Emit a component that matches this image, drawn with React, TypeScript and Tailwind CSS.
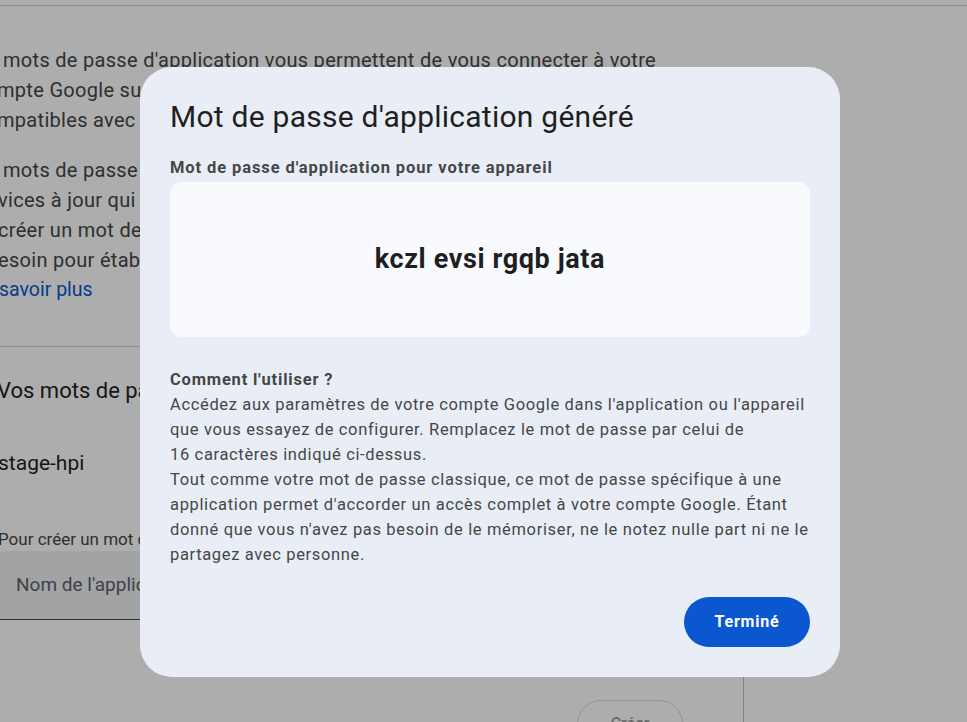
import React from "react";

const font = { fontFamily: "Roboto, 'Noto Sans', sans-serif" };

const PageBehind: React.FC = () => {
  return (
    <div className="min-h-screen bg-white text-[#444746] overflow-hidden" style={font}>
      <div className="h-[6px] border-b border-[#d3d3d3]" />
      <div className="w-[744px]">
        {/* intro text, cut on the left like the real page */}
        <div className="pt-[39px] text-[20px] leading-[30px] tracking-[0.3px] whitespace-nowrap">
          <div className="pl-[3px]">mots de passe d'application vous permettent de vous connecter à votre</div>
          <div className="-ml-[3px]">mpte Google sur des applications et des services plus anciens qui ne sont pas</div>
          <div className="-ml-[3px]">mpatibles avec les normes de sécurité modernes.</div>
          <div className="mt-[20px] pl-[3px]">mots de passe d'application sont moins sécurisés que les applications et</div>
          <div className="-ml-[2px]">vices à jour qui utilisent des normes de sécurité modernes. Avant de</div>
          <div className="-ml-[2px]">créer un mot de passe d'application, vérifiez si votre application en a</div>
          <div className="-ml-[2px]">esoin pour établir la connexion.</div>
          <div className="-ml-[1px] text-[19.5px] tracking-normal text-[#0b57d0]">savoir plus</div>
        </div>

        <div className="mt-[41px] border-t border-[#d3d3d3]" />

        <div className="pt-[29px] text-[22px] leading-[30px] text-[#1f1f1f] whitespace-nowrap -ml-[3px]">
          Vos mots de passe d'application
        </div>
        <div className="pt-[42px] text-[21px] leading-[30px] text-[#1f1f1f] whitespace-nowrap -ml-[2px]">
          stage-hpi
        </div>

        <div className="mt-[49px] border-r border-[#c4c7c5] pb-[80px]">
          <div className="text-[17px] leading-[24px] whitespace-nowrap -ml-[2px]">
            Pour créer un mot de passe spécifique à une application, saisissez son nom ci-dessous…
          </div>
          <div className="h-[69px] w-[720px] bg-[#eef0f3] border-b border-[#444746] flex items-center pl-[16px] text-[19px] text-[#5f6368]">
            Nom de l'application
          </div>
          <div className="mt-[80px] ml-[577px] w-[106px] h-[48px] rounded-full border border-[#d9d9d9] flex items-center justify-center text-[#9a9a9a] text-[16px] font-medium">
            Créer
          </div>
        </div>
      </div>
    </div>
  );
};

const Dialog: React.FC = () => {
  return (
    <div
      className="fixed left-[140px] top-[67px] w-[700px] rounded-[32px] bg-[#e9eef6] px-[30px] pt-[32px] pb-[30px]"
      style={font}
    >
      <h2 className="text-[30px] leading-[36px] font-normal tracking-[0.25px] text-[#1f1f1f]">
        Mot de passe d'application généré
      </h2>
      <div className="mt-[21px] text-[16.5px] leading-[24px] font-bold tracking-[0.9px] text-[#444746]">
        Mot de passe d'application pour votre appareil
      </div>
      <div className="mt-[2px] h-[155px] rounded-[12px] bg-[#f8fafd] flex items-center justify-center">
        <span className="text-[27px] font-bold text-[#1f1f1f] tracking-[0.6px]">kczl evsi rgqb jata</span>
      </div>
      <div className="mt-[30px] text-[16.5px] leading-[25px] tracking-[0.65px] text-[#444746]">
        <div className="font-bold tracking-[0.8px]">Comment l'utiliser ?</div>
        <div>Accédez aux paramètres de votre compte Google dans l'application ou l'appareil</div>
        <div>que vous essayez de configurer. Remplacez le mot de passe par celui de</div>
        <div>16 caractères indiqué ci-dessus.</div>
        <div>Tout comme votre mot de passe classique, ce mot de passe spécifique à une</div>
        <div>application permet d'accorder un accès complet à votre compte Google. Étant</div>
        <div>donné que vous n'avez pas besoin de le mémoriser, ne le notez nulle part ni ne le</div>
        <div>partagez avec personne.</div>
      </div>
      <div className="mt-[30px] flex justify-end">
        <button className="h-[50px] w-[126px] rounded-full bg-[#0b57d0] text-white text-[16px] font-bold tracking-[0.8px]">
          Terminé
        </button>
      </div>
    </div>
  );
};

export default function App() {
  return (
    <div className="relative">
      <PageBehind />
      <div className="fixed inset-0 bg-black/[0.32]" />
      <Dialog />
    </div>
  );
}
